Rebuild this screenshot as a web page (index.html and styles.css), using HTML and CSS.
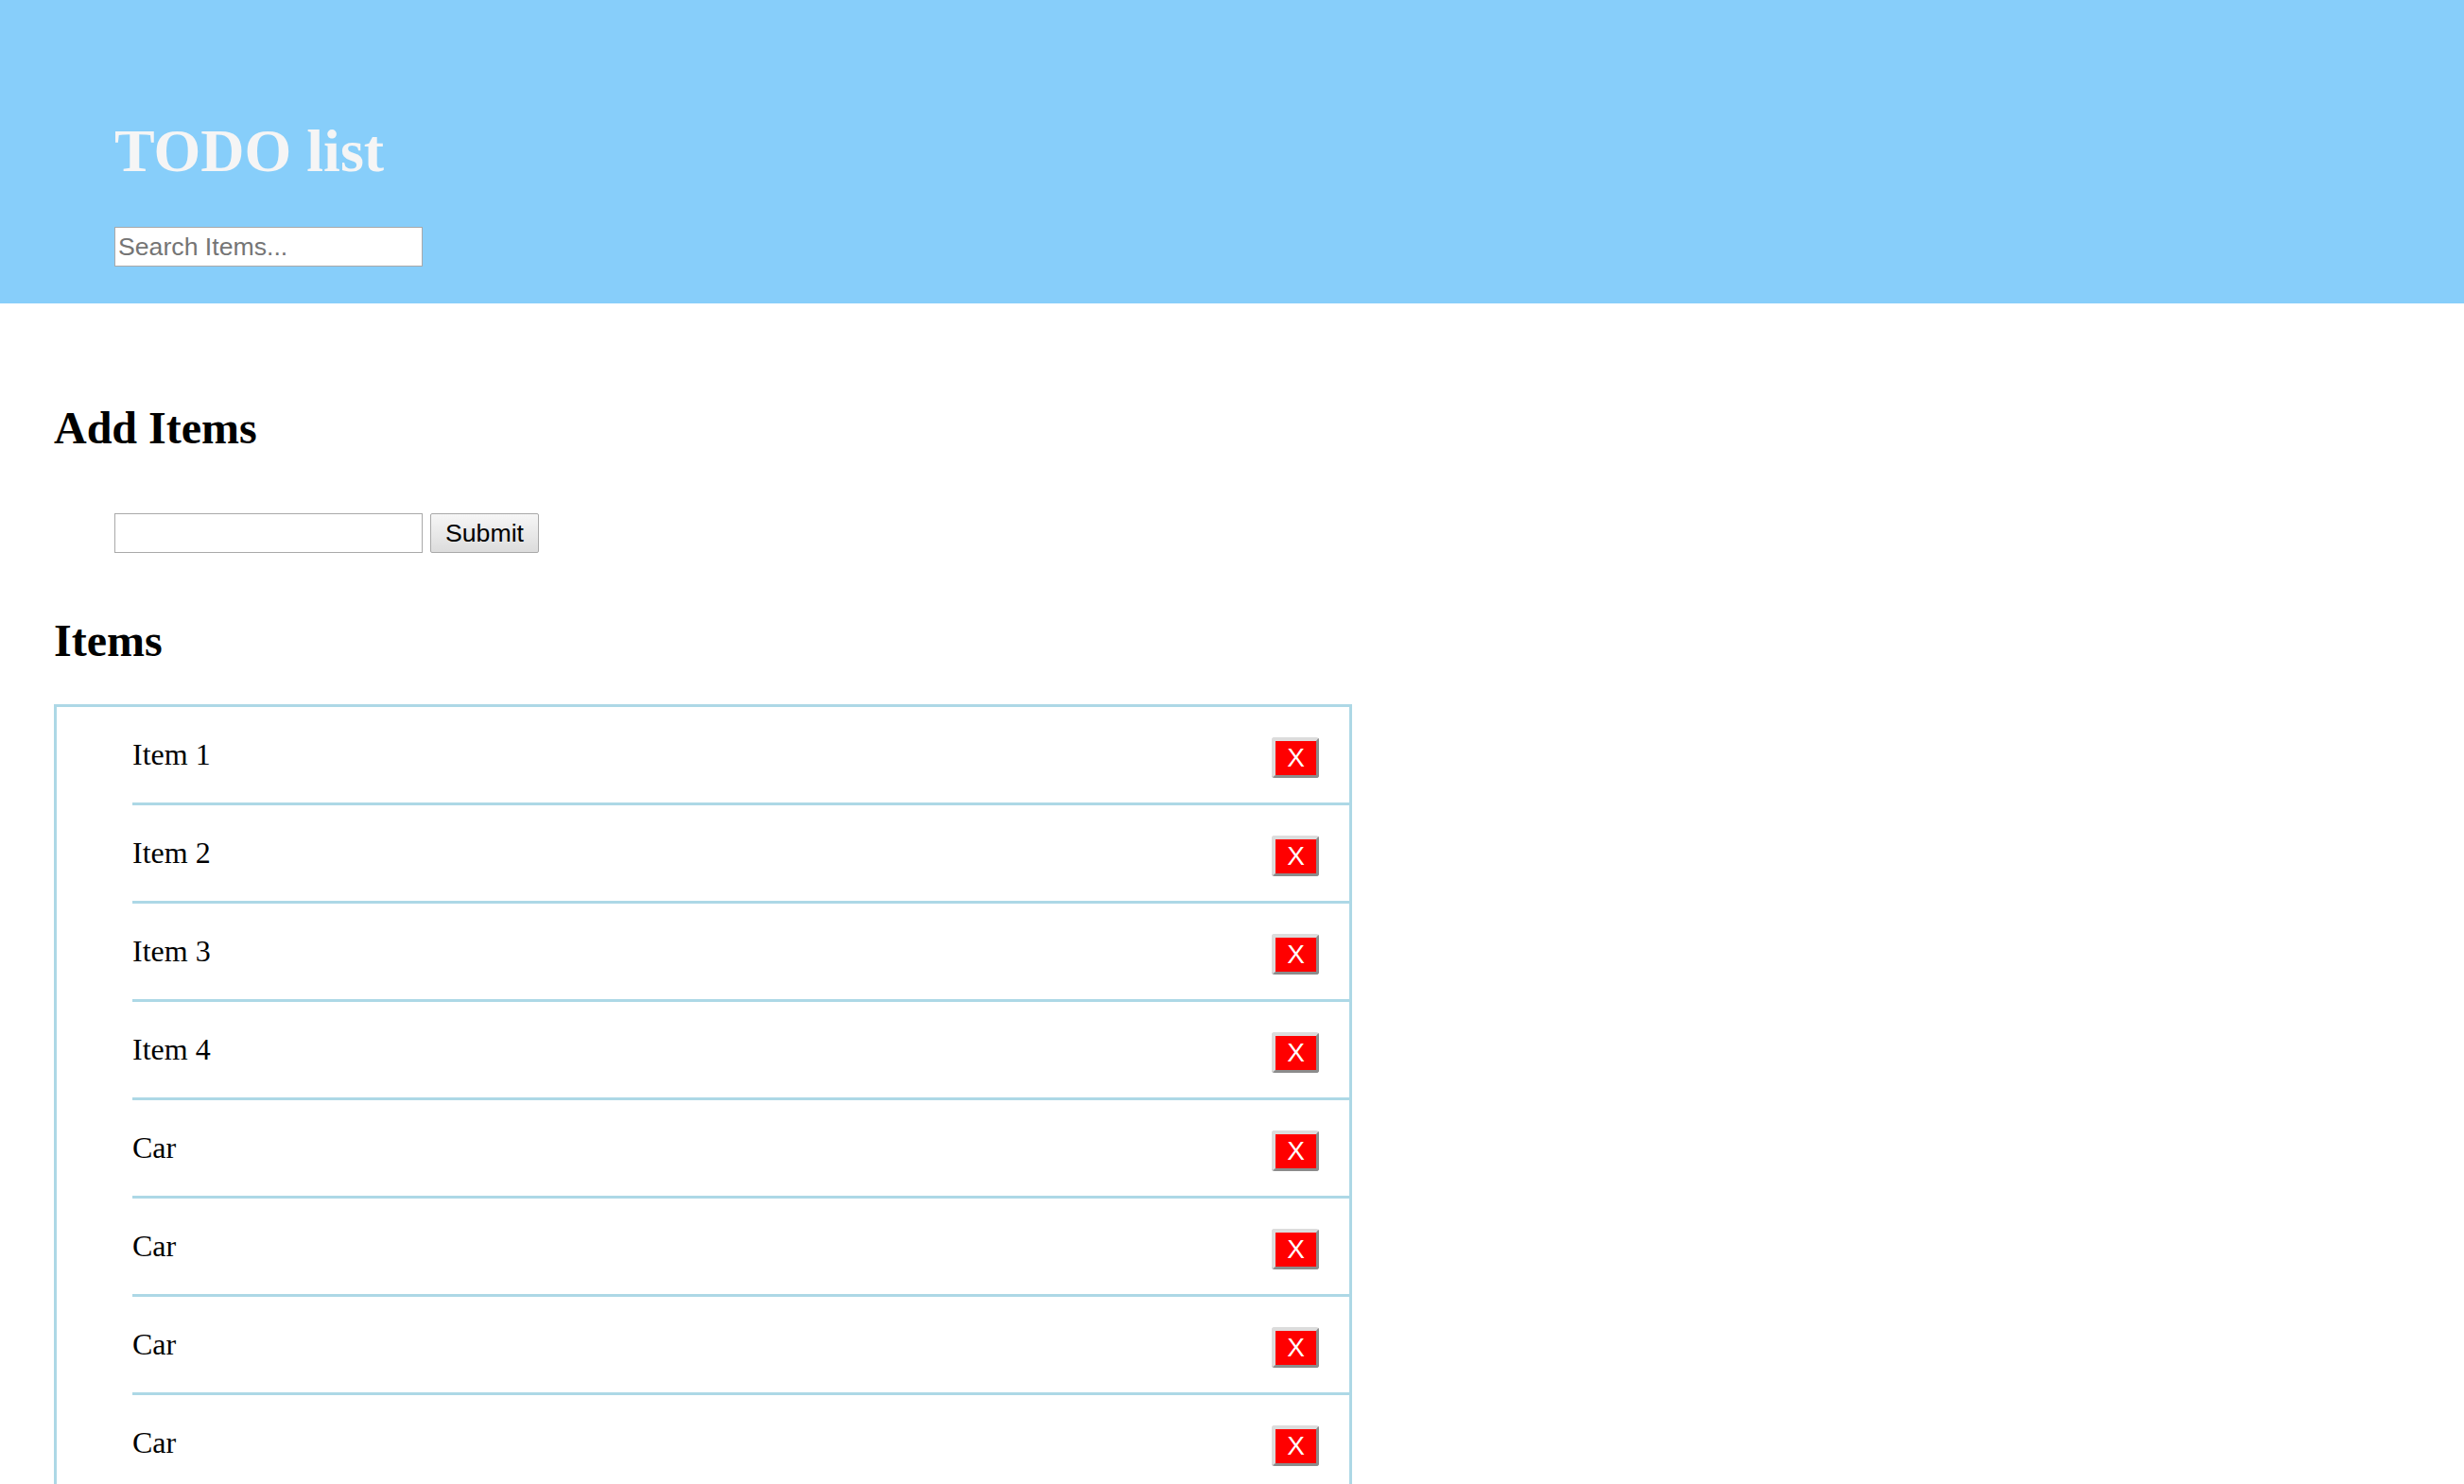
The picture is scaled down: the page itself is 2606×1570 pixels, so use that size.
FILE: index.html
```html
<!DOCTYPE html>
<html lang="en">
<head>
<meta charset="utf-8">
<title>TODO list</title>
<link rel="stylesheet" href="styles.css">
</head>
<body>
<header class="top">
  <h1 class="title">TODO list</h1>
  <input class="field search" type="text" placeholder="Search Items...">
</header>
<main class="content">
  <h2 class="section">Add Items</h2>
  <form class="add-form">
    <input class="field" type="text">
    <button class="submit" type="button">Submit</button>
  </form>
  <h2 class="section section-items">Items</h2>
  <div class="list-box">
    <ul class="items">
      <li class="item">Item 1<button class="del" type="button">X</button></li>
      <li class="item">Item 2<button class="del" type="button">X</button></li>
      <li class="item">Item 3<button class="del" type="button">X</button></li>
      <li class="item">Item 4<button class="del" type="button">X</button></li>
      <li class="item">Car<button class="del" type="button">X</button></li>
      <li class="item">Car<button class="del" type="button">X</button></li>
      <li class="item">Car<button class="del" type="button">X</button></li>
      <li class="item">Car<button class="del" type="button">X</button></li>
    </ul>
  </div>
</main>
</body>
</html>
```

FILE: styles.css
```css
html, body {
  margin: 0;
  padding: 0;
  background: #ffffff;
}

body {
  font-family: "Liberation Serif", "Times New Roman", serif;
  font-size: 32px;
  color: #000000;
}

.top {
  background: #87cefa;
  padding: 80px 0 39px 121px;
  display: flex;
  flex-direction: column;
  align-items: flex-start;
}

.title {
  margin: 43px 0 43px 0;
  font-size: 64px;
  font-weight: bold;
  color: #f5f5f5;
  line-height: normal;
}

.field {
  box-sizing: border-box;
  width: 326px;
  height: 42px;
  margin: 0;
  padding: 0 3px;
  border: 1px solid #a9a9a9;
  background: #ffffff;
  font-family: "Liberation Sans", Arial, sans-serif;
  font-size: 26.67px;
  color: #000000;
  outline: none;
}

.field::placeholder {
  color: #757575;
}

.content {
  display: flex;
  flex-direction: column;
  align-items: flex-start;
  padding: 0 0 0 57px;
}

.section {
  margin: 104px 0 0 0;
  font-size: 48px;
  font-weight: bold;
  line-height: normal;
}

.section-items {
  margin-top: 65px;
}

.add-form {
  display: flex;
  gap: 8px;
  margin: 63px 0 0 64px;
}

.submit {
  box-sizing: border-box;
  width: 115px;
  height: 42px;
  margin: 0;
  padding: 0;
  border: 1px solid #a9a9a9;
  border-radius: 2px;
  background: linear-gradient(#f6f6f6, #dcdcdc);
  font-family: "Liberation Sans", Arial, sans-serif;
  font-size: 26.67px;
  color: #000000;
}

.list-box {
  box-sizing: border-box;
  width: 1373px;
  margin-top: 40px;
  border: 3px solid #add8e6;
}

.items {
  list-style: none;
  margin: 0;
  padding: 0 0 0 80px;
}

.item {
  padding: 32px 32px 32px 0;
  border-bottom: 3px solid #add8e6;
  line-height: normal;
}

.del {
  float: right;
  box-sizing: border-box;
  width: 50px;
  height: 43px;
  margin: 0;
  padding: 0;
  border-style: solid;
  border-width: 4px 3px 3px 4px;
  border-color: #dcdcdc #8c8c8c #8c8c8c #dcdcdc;
  border-radius: 3px;
  background: #ff0000;
  color: #ffffff;
  font-family: "Liberation Sans", Arial, sans-serif;
  font-size: 28px;
  line-height: 1;
}
```
